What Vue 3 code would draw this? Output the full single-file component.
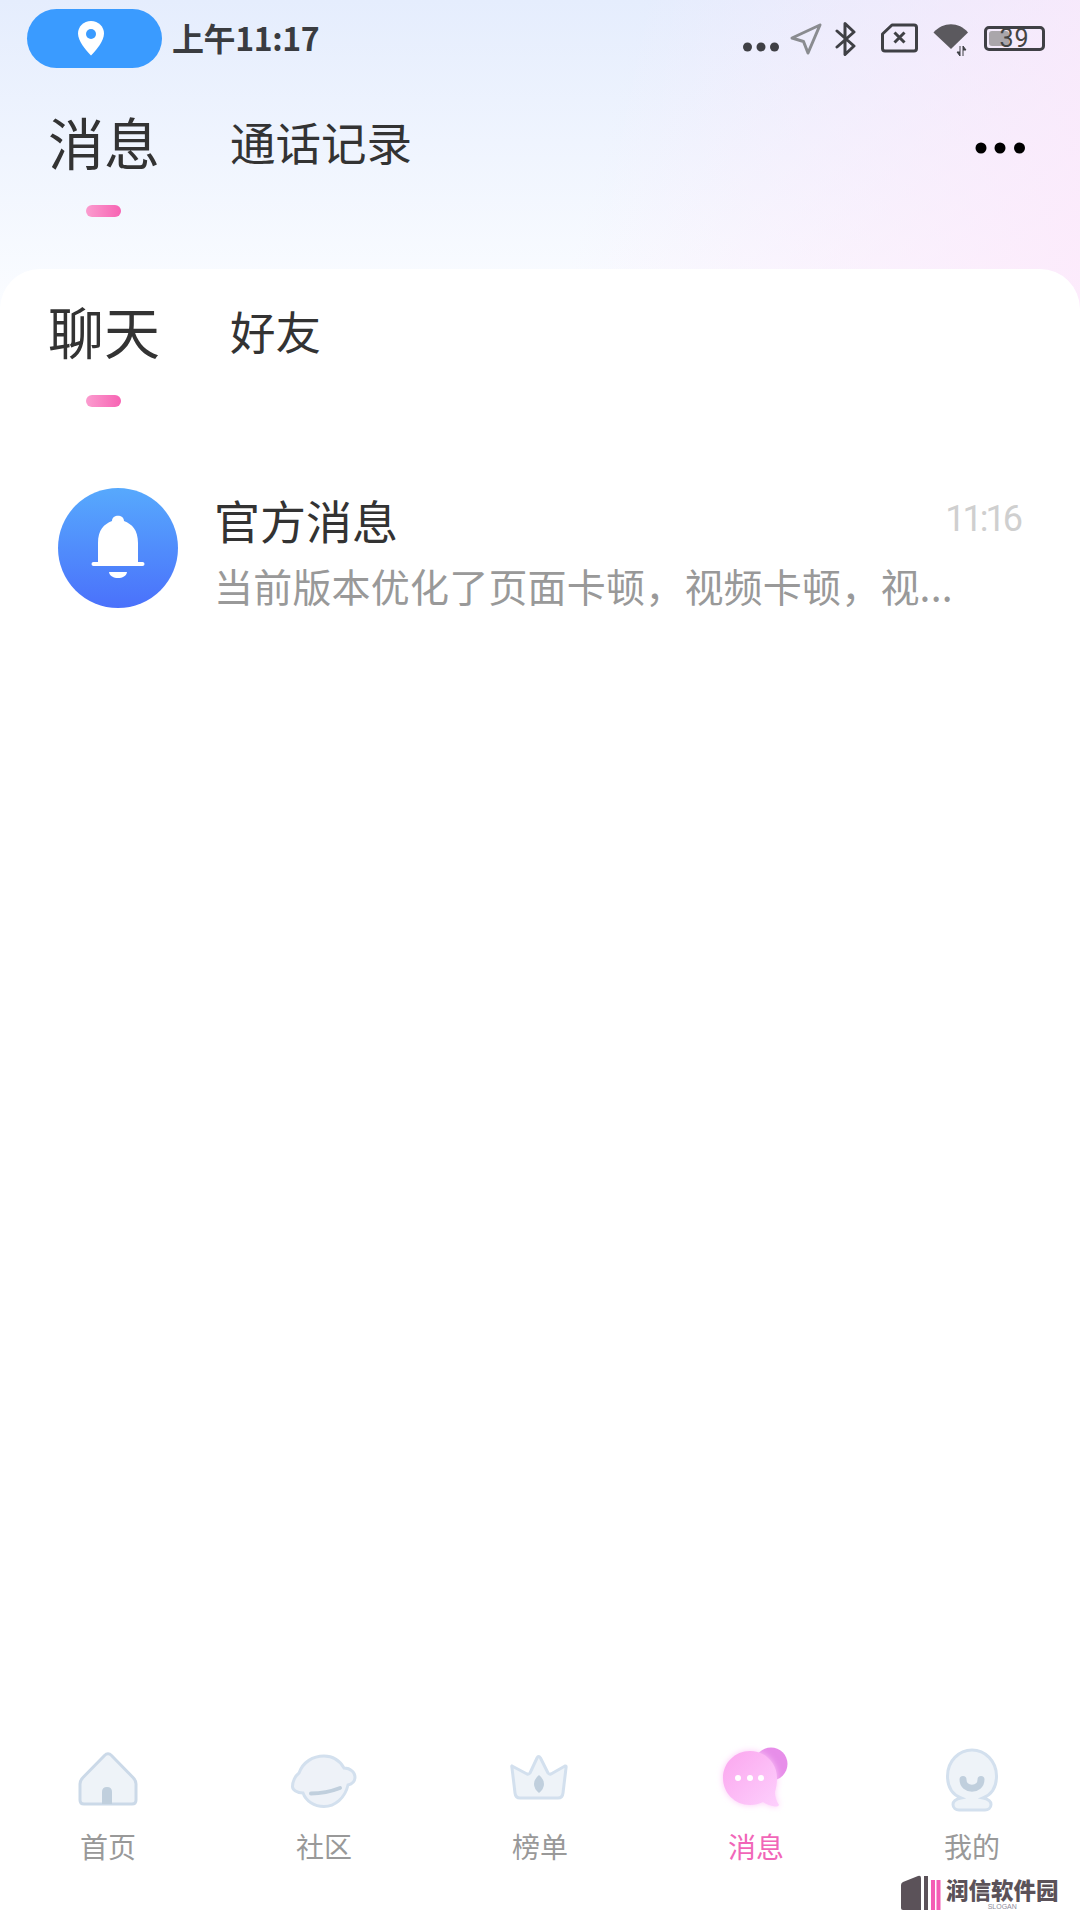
<script setup>
const topTabs = ['消息', '通话记录']
const subTabs = ['聊天', '好友']
const navItems = [
  { key: 'home', label: '首页' },
  { key: 'planet', label: '社区' },
  { key: 'crown', label: '榜单' },
  { key: 'chat', label: '消息', active: true },
  { key: 'me', label: '我的' }
]
</script>

<template>
  <div class="page">
    <header class="head">
      <div class="status">
        <div class="pill">
          <svg width="28" height="36" viewBox="0 0 28 36">
            <path d="M14 1C6.5 1 1 6.6 1 13.6C1 21 8.5 30 14 35.5C19.5 30 27 21 27 13.6C27 6.6 21.5 1 14 1Z" fill="#fff" />
            <circle cx="14" cy="14" r="5" fill="#3a9bff" />
          </svg>
        </div>
        <span class="clock">上午11:17</span>
        <div class="status-icons">
          <svg class="i-dots" width="36" height="10" viewBox="0 0 36 10">
            <circle cx="4.5" cy="5" r="4.5" /><circle cx="18" cy="5" r="4.5" /><circle cx="31.5" cy="5" r="4.5" />
          </svg>
          <svg class="i-nav" width="32" height="32" viewBox="0 0 32 32">
            <path d="M30 2L2 15L13.5 18.5L18 30Z" fill="none" stroke="#8a8c90" stroke-width="3" stroke-linejoin="round" />
          </svg>
          <svg class="i-bt" width="22" height="36" viewBox="0 0 22 36">
            <path d="M2 10L19 25L10 33.5V2.5L19 11L2 26" fill="none" stroke="#3f4045" stroke-width="3" stroke-linejoin="round" stroke-linecap="round" />
          </svg>
          <svg class="i-sim" width="37" height="30" viewBox="0 0 37 30">
            <path d="M11 2H33Q35.500 2 35.500 4.500V25.500Q35.500 28 33 28H4Q1.500 28 1.500 25.500V11Z" fill="none" stroke="#3f4045" stroke-width="3" stroke-linejoin="round" />
            <path d="M13.500 9.500L23.500 19.500M23.500 9.500L13.500 19.500" stroke="#3f4045" stroke-width="3" />
          </svg>
          <svg class="i-wifi" width="36" height="34" viewBox="0 0 36 34">
            <path d="M0.500 9.500C10 -1.500 26 -1.500 35 9.500L18 26Z" fill="#5b595e" />
            <path d="M27 23V33L24 29H27M30 33V23L33 27H30" fill="#3f4045" stroke="#3f4045" stroke-width="1" />
          </svg>
          <div class="battery"><i class="level"></i><span>39</span></div>
        </div>
      </div>

      <div class="tabs top-tabs">
        <div v-for="(tab, i) in topTabs" :key="tab" class="tab" :class="{ on: i === 0 }">
          <span>{{ tab }}</span>
          <i v-if="i === 0" class="bar"></i>
        </div>
        <svg class="more" width="50" height="12" viewBox="0 0 50 12">
          <circle cx="6" cy="6" r="5.500" /><circle cx="25" cy="6" r="5.500" /><circle cx="44.500" cy="6" r="5.500" />
        </svg>
      </div>
    </header>

    <main class="panel">
      <div class="tabs sub-tabs">
        <div v-for="(tab, i) in subTabs" :key="tab" class="tab" :class="{ on: i === 0 }">
          <span>{{ tab }}</span>
          <i v-if="i === 0" class="bar"></i>
        </div>
      </div>

      <div class="row">
        <div class="avatar">
          <svg width="56" height="72" viewBox="0 0 56 72">
            <path d="M8 50V31C8 18 14 12 22 9C22 2 34 2 34 9C42 12 48 18 48 31V50Z" fill="#fff" />
            <rect x="1.500" y="50" width="53" height="4" rx="2" fill="#fff" />
            <path d="M19 60H37C36 68 20 68 19 60Z" fill="#fff" />
          </svg>
        </div>
        <div class="row-body">
          <div class="row-top">
            <span class="row-title">官方消息</span>
            <span class="row-time">11:16</span>
          </div>
          <div class="row-sub">当前版本优化了页面卡顿，视频卡顿，视...</div>
        </div>
      </div>
    </main>

    <nav class="nav">
      <div v-for="item in navItems" :key="item.key" class="nav-item" :class="{ on: item.active }">
        <svg class="nav-icon" width="80" height="64" viewBox="0 0 80 64">
          <template v-if="item.key === 'home'">
            <path d="M36.500 7.500Q40 4 43.500 7.500L65 29.500Q68 32.500 68 36V52Q68 56 64 56H16Q12 56 12 52V36Q12 32.500 15 29.500Z" fill="#eef3f8" stroke="#cbd9e8" stroke-width="3" />
            <path d="M34 56V44Q34 39 39 39Q44 39 44 44V56Z" fill="#c0cfdd" />
          </template>
          <template v-else-if="item.key === 'planet'">
            <path d="M15 25C19 14 29 8 40 8C49 8 56 13 60 20C67 20 71 25 71 29C71 33 68 36 64 37C61 50 51 58.500 40 58.500C30 58.500 22 53 19 45C13 45 8.500 42 8.500 38.500C8.500 34 11 28 15 25Z" fill="#eef2f8" stroke="#d3e0ee" stroke-width="3" />
            <path d="M27 45.500C37 45.500 47 43.500 56 40" fill="none" stroke="#c0cfdd" stroke-width="4" stroke-linecap="round" />
          </template>
          <template v-else-if="item.key === 'crown'">
            <path d="M12 18L27 26Q29 26.500 30 25L37 10Q38.500 7 40.500 10L48 25Q49 26.500 51 26L65 18Q66.500 17.500 66 20L63 45Q62.500 50 58 50H20Q15.500 50 15 45L12 20Q11.500 17.500 12 18Z" fill="#eef3f8" stroke="#d3e0ee" stroke-width="3" stroke-linejoin="round" />
            <path d="M39 27Q44 31 44 36Q44 41 39 45Q34 41 34 36Q34 31 39 27Z" fill="#c0cfdd" />
          </template>
          <template v-else-if="item.key === 'chat'">
            <defs>
              <linearGradient id="chatFill" x1="0" y1="0" x2="1" y2="1">
                <stop offset="0" stop-color="#fba6ee" />
                <stop offset="1" stop-color="#fdd0fd" />
              </linearGradient>
              <filter id="chatGlow" x="-30%" y="-30%" width="160%" height="160%">
                <feGaussianBlur stdDeviation="3" />
              </filter>
            </defs>
            <circle cx="55" cy="16" r="16.500" fill="#e78ee9" />
            <path d="M34 3C49 3 61 15 61 30C61 36 60 40 59 44C59 48 60 53 63 57Q62 59 59 58.500C54 58 50 56 47 54C43 56 39 57 34 57C19 57 7 45 7 30C7 15 19 3 34 3Z" fill="#fdc8f8" filter="url(#chatGlow)" />
            <path d="M34 3C49 3 61 15 61 30C61 36 60 40 59 44C59 48 60 53 63 57Q62 59 59 58.500C54 58 50 56 47 54C43 56 39 57 34 57C19 57 7 45 7 30C7 15 19 3 34 3Z" fill="url(#chatFill)" />
            <circle cx="22" cy="30" r="3" fill="#fff" /><circle cx="34" cy="30" r="3" fill="#fff" /><circle cx="45" cy="30" r="3" fill="#fff" />
          </template>
          <template v-else>
            <path d="M29 50C19 46 15.500 37 15.500 28C15.500 13 27 2 40 2C53 2 64.500 13 64.500 28C64.500 37 61 46 51 50C56 51 59 53 59 56.500C59 60 56 62 53 62H27C24 62 21 60 21 56.500C21 53 24 51 29 50Z" fill="#eef3f8" stroke="#d3e0ee" stroke-width="3" />
            <path d="M31 31.500C31 43 49 43 49 31.500" fill="none" stroke="#c0cfdd" stroke-width="7" stroke-linecap="round" />
          </template>
        </svg>
        <span class="nav-label">{{ item.label }}</span>
      </div>
    </nav>

    <div class="mark">
      <svg width="40" height="36" viewBox="0 0 40 36">
        <path d="M0 10Q0 8 2 7L17 1Q20 0 20 3V35H2Q0 35 0 33Z" fill="#5b5259" />
        <rect x="23" y="1" width="4" height="34" fill="#5b5259" />
        <rect x="30" y="5" width="4" height="30" fill="#f45db5" />
        <rect x="35.500" y="5" width="4" height="30" fill="#f45db5" />
      </svg>
      <div class="mark-text">
        <b>润信软件园</b>
        <small>SLOGAN</small>
      </div>
    </div>
  </div>
</template>

<style scoped>
.page {
  position: relative;
  width: 1080px;
  height: 1920px;
  display: flex;
  flex-direction: column;
  overflow: hidden;
  font-family: "Noto Sans CJK SC", "Noto Sans", sans-serif;
  color: #333;
  background-color: #fff;
  background-image:
    linear-gradient(105deg, rgba(252, 228, 250, 0) 55%, rgba(253, 232, 251, 0.85) 100%),
    linear-gradient(to bottom, #e5edfd 0, #fafcff 300px);
  background-size: 100% 310px;
  background-repeat: no-repeat;
}
.head {
  height: 269px;
  flex: none;
}
.status {
  height: 76px;
  display: flex;
  align-items: center;
  padding: 0 35px 0 27px;
}
.pill {
  width: 128px;
  height: 59px;
  padding-right: 7px;
  border-radius: 30px;
  background: #3a9bff;
  display: flex;
  align-items: center;
  justify-content: center;
}
.clock {
  margin-left: 10px;
  margin-top: -2px;
  font-size: 32px;
  font-weight: 700;
  letter-spacing: -0.4px;
  color: #3a3c40;
}
.status-icons {
  margin-left: auto;
  display: flex;
  align-items: center;
}
.status-icons svg {
  fill: #3f4045;
}
.i-dots { margin-top: 18px; margin-right: 11px; }
.i-nav { margin-right: 13px; margin-top: 2px; }
.i-bt { margin-right: 24px; margin-top: 2px; }
.i-sim { margin-right: 15px; }
.i-wifi { margin-right: 15px; margin-top: 4px; }
.battery {
  position: relative;
  width: 61px;
  height: 25px;
  box-sizing: border-box;
  border: 3px solid #3f4045;
  border-radius: 5px;
  display: flex;
  align-items: center;
  justify-content: center;
}
.battery .level {
  position: absolute;
  left: 2px;
  top: 2px;
  bottom: 2px;
  width: 20px;
  background: #aaa6ab;
  border-radius: 3px;
}
.battery span {
  position: relative;
  font-family: Roboto, sans-serif;
  font-size: 25px;
  line-height: 1;
  letter-spacing: 1px;
  color: #444;
}
.tabs {
  display: flex;
  align-items: flex-start;
  padding-left: 48px;
  gap: 70px;
}
.top-tabs {
  position: relative;
  padding-top: 31px;
}
.sub-tabs {
  padding-top: 27px;
}
.tab {
  position: relative;
  font-size: 45.5px;
  line-height: 68px;
  height: 68px;
}
.tab.on {
  font-size: 56px;
  width: 112px;
}
.bar {
  position: absolute;
  left: 38px;
  top: 98px;
  width: 35px;
  height: 12px;
  border-radius: 6px;
  background: linear-gradient(to right, #fb9ccf, #f763b3);
}
.sub-tabs .bar {
  top: 99px;
}
.more {
  position: absolute;
  right: 55px;
  top: 66px;
}
.panel {
  flex: 1;
  background: #fff;
  border-radius: 40px 40px 0 0;
}
.row {
  display: flex;
  align-items: flex-start;
  margin-top: 124px;
  padding: 0 60px 0 58px;
}
.avatar {
  width: 120px;
  height: 120px;
  flex: none;
  border-radius: 50%;
  background: linear-gradient(to bottom, #57a9fd, #4a71fb);
  display: flex;
  align-items: center;
  justify-content: center;
}
.row-body {
  flex: 1;
  margin-left: 36px;
}
.row-top {
  display: flex;
  justify-content: space-between;
  align-items: center;
  height: 62px;
}
.row-title {
  font-size: 46px;
  color: #333;
}
.row-time {
  font-family: Roboto, sans-serif;
  font-size: 36px;
  letter-spacing: -3px;
  color: #cfcfcf;
}
.row-sub {
  font-size: 39px;
  line-height: 70px;
  letter-spacing: 0.2px;
  color: #999;
  white-space: nowrap;
}
.nav {
  display: flex;
  flex: none;
  height: 172px;
}
.nav-item {
  flex: 1;
  display: flex;
  flex-direction: column;
  align-items: center;
}
.nav-icon {
  overflow: visible;
}
.nav-label {
  margin-top: 14px;
  font-size: 28px;
  line-height: 40px;
  color: #999;
}
.nav-item.on .nav-label {
  color: #f166b8;
}
.mark {
  position: absolute;
  left: 901px;
  top: 1875px;
  display: flex;
  gap: 5px;
}
.mark-text {
  display: flex;
  flex-direction: column;
  align-items: center;
}
.mark-text b {
  font-size: 22.5px;
  line-height: 28px;
  font-weight: 900;
  color: #5b5259;
  white-space: nowrap;
}
.mark-text small {
  font-family: "Liberation Sans", sans-serif;
  font-size: 7px;
  line-height: 8px;
  color: #8d8a99;
}
</style>
